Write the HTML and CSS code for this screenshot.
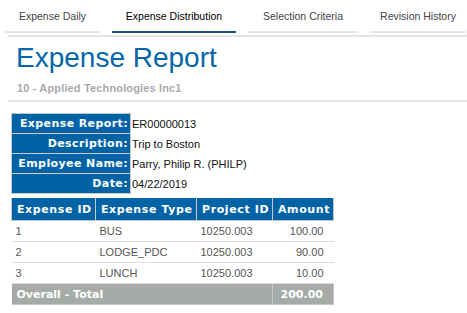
FILE: index.html
```html
<!DOCTYPE html>
<html lang="en">
<head>
    <meta charset="UTF-8">
    <title>Expense Report</title>
    <link rel="stylesheet" href="styles.css">
</head>
<body>
    <div class="tabs">
        <div class="tab">Expense Daily</div>
        <div class="tab active">Expense Distribution</div>
        <div class="tab">Selection Criteria</div>
        <div class="tab">Revision History</div>
    </div>
    <div class="page">
        <h1>Expense Report</h1>
        <div class="company">10 - Applied Technologies Inc1</div>

        <table class="info">
            <tr><th>Expense Report:</th><td>ER00000013</td></tr>
            <tr><th>Description:</th><td>Trip to Boston</td></tr>
            <tr><th>Employee Name:</th><td>Parry, Philip R. (PHILP)</td></tr>
            <tr><th>Date:</th><td>04/22/2019</td></tr>
        </table>

        <table class="grid">
            <colgroup>
                <col class="c-id">
                <col class="c-type">
                <col class="c-proj">
                <col class="c-amt">
            </colgroup>
            <tr>
                <th>Expense ID</th>
                <th>Expense Type</th>
                <th>Project ID</th>
                <th>Amount</th>
            </tr>
            <tr><td>1</td><td>BUS</td><td>10250.003</td><td class="num">100.00</td></tr>
            <tr><td>2</td><td>LODGE_PDC</td><td>10250.003</td><td class="num">90.00</td></tr>
            <tr><td>3</td><td>LUNCH</td><td>10250.003</td><td class="num">10.00</td></tr>
            <tr class="total"><td colspan="3">Overall - Total</td><td class="num">200.00</td></tr>
        </table>
    </div>
</body>
</html>
```

FILE: styles.css
```css
body {
    margin: 0;
    font-family: "Liberation Sans", Arial, sans-serif;
    background: #fff;
}
.tabs {
    display: flex;
    padding: 0 0 0 5px;
}
.tab {
    height: 31px;
    line-height: 32px;
    font-size: 10.5px;
    color: #444;
    text-align: center;
    border-bottom: 2px solid #e6e6e6;
    margin-right: 12px;
}
.tab:nth-child(1) { width: 95px; }
.tab:nth-child(2) { width: 124px; }
.tab:nth-child(3) { width: 110px; }
.tab:nth-child(4) { width: 96px; margin-right: 0; }
.tab.active {
    color: #000;
    border-bottom-color: #1f4e89;
}
.page {
    margin: 2px 0 0 8px;
    border-top: 2px solid #e3e3e3;
}
h1 {
    margin: 0;
    padding: 5px 0 0 8px;
    font-size: 28px;
    font-weight: normal;
    color: #0466aa;
    line-height: 32px;
}
.company {
    padding: 8px 0 5px 9px;
    font-size: 11px;
    line-height: 13px;
    letter-spacing: 0.15px;
    font-weight: bold;
    color: #a9a9a9;
    border-bottom: 2px solid #e3e3e3;
}
.info {
    border-collapse: collapse;
    margin: 11px 0 0 3px;
}
.info th {
    background: #0063a6;
    color: #fff;
    font-family: "DejaVu Sans", Verdana, sans-serif;
    font-size: 11px;
    letter-spacing: 0.4px;
    text-align: right;
    white-space: nowrap;
    width: 113px;
    padding: 0 2px 0 3px;
    height: 19px;
    border: 1px solid #c8c8c8;
}
.info td {
    font-size: 11px;
    color: #111;
    padding: 0 0 0 1px;
    white-space: nowrap;
    border: 1px solid transparent;
}
.grid {
    border-collapse: collapse;
    table-layout: fixed;
    width: 322px;
    margin: 4px 0 0 3px;
}
.c-id { width: 84px; }
.c-type { width: 101px; }
.c-proj { width: 76px; }
.c-amt { width: 61px; }
.grid th {
    background: #0063a6;
    color: #fff;
    font-family: "DejaVu Sans", Verdana, sans-serif;
    font-size: 11px;
    letter-spacing: 0.6px;
    height: 22px;
    padding: 0 0 0 5px;
    border: 1px solid #c8c8c8;
    border-top: 0;
    text-align: left;
    white-space: nowrap;
    overflow: hidden;
}
.grid td {
    font-size: 11px;
    color: #555;
    height: 20px;
    padding: 0 10px 0 4px;
    border-bottom: 1px solid #dedede;
}
.grid td.num {
    text-align: right;
}
.grid .total td {
    background: #a7aba7;
    color: #fff;
    font-family: "DejaVu Sans", Verdana, sans-serif;
    font-weight: bold;
    padding-left: 5px;
    border: 1px solid #c8c8c8;
    border-left: 0;
}
```
